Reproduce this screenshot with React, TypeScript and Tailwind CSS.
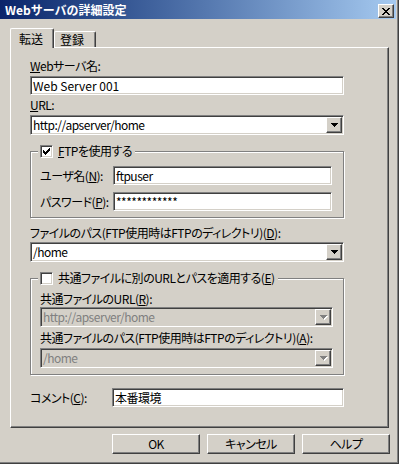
import React from "react";

const sunken =
  "border border-t-[#808080] border-l-[#808080] border-r-white border-b-white shadow-[inset_1px_1px_0_#404040,inset_-1px_-1px_0_#d4d0c8]";
const raised =
  "border border-t-white border-l-white border-r-[#404040] border-b-[#404040] shadow-[inset_-1px_-1px_0_#808080]";
const etched =
  "border border-[#808080] shadow-[inset_1px_1px_0_#ffffff,1px_1px_0_#ffffff]";

function CloseGlyph() {
  return (
    <svg width="8" height="7" viewBox="0 0 8 7" shapeRendering="crispEdges">
      <path
        fill="#000"
        d="M0 0h2v1h-2zM6 0h2v1h-2zM1 1h2v1h-2zM5 1h2v1h-2zM2 2h4v1h-4zM3 3h2v1h-2zM2 4h4v1h-4zM1 5h2v1h-2zM5 5h2v1h-2zM0 6h2v1h-2zM6 6h2v1h-2z"
      />
    </svg>
  );
}

function CheckGlyph() {
  return (
    <svg width="7" height="7" viewBox="0 0 7 7" shapeRendering="crispEdges">
      <path
        fill="#000"
        d="M0 2h1v3h-1zM1 3h1v3h-1zM2 4h1v3h-1zM3 3h1v3h-1zM4 2h1v3h-1zM5 1h1v3h-1zM6 0h1v3h-1z"
      />
    </svg>
  );
}

function Arrow({ disabled }: { disabled?: boolean }) {
  const d = "M0 0h7v1h-7zM1 1h5v1h-5zM2 2h3v1h-3zM3 3h1v1h-1z";
  return (
    <svg width="8" height="5" viewBox="0 0 8 5" shapeRendering="crispEdges">
      {disabled && <path fill="#fff" transform="translate(1 1)" d={d} />}
      <path fill={disabled ? "#808080" : "#000"} d={d} />
    </svg>
  );
}

function Checkbox({ checked }: { checked?: boolean }) {
  return (
    <span className={`w-[13px] h-[13px] shrink-0 bg-white flex items-center justify-center ${sunken}`}>
      {checked && <CheckGlyph />}
    </span>
  );
}

function Edit({ value, className }: { value: string; className: string }) {
  return (
    <div className={`${className} h-[19px] shrink-0 bg-white pl-[2px] flex items-center whitespace-nowrap overflow-hidden ${sunken}`}>
      {value}
    </div>
  );
}

function Combo({ value, className, disabled }: { value: string; className: string; disabled?: boolean }) {
  return (
    <div
      className={`${className} h-[20px] p-[1px] flex ${sunken} ${
        disabled ? "bg-[#d4d0c8] text-[#808080]" : "bg-white"
      }`}
    >
      <span className="flex-1 pl-[1px] flex items-center whitespace-nowrap overflow-hidden">{value}</span>
      <span className={`w-[16px] h-full bg-[#d4d0c8] flex items-center justify-center pl-[1px] ${raised}`}>
        <Arrow disabled={disabled} />
      </span>
    </div>
  );
}

function Button({ label }: { label: string }) {
  return (
    <button className={`w-[88px] h-[20px] bg-[#d4d0c8] flex items-center justify-center ${raised}`}>{label}</button>
  );
}

export default function App() {
  return (
    <div className="w-[399px] h-[464px] overflow-hidden whitespace-nowrap bg-[#d4d0c8] pr-[3px] font-['Noto_Sans_CJK_JP',sans-serif] [font-feature-settings:'palt'] text-[12px] leading-[14px] tracking-[-0.5px] text-black shadow-[inset_-1px_-1px_0_#404040,inset_-2px_-2px_0_#808080]">
      {/* title bar */}
      <div className="h-[19px] flex items-start bg-linear-to-r from-[#0a246a] to-[#a6caf0] pl-[5px] pr-[2px]">
        <span className="flex-1 mt-[3px] font-bold text-white tracking-normal [font-feature-settings:normal]">
          Webサーバの詳細設定
        </span>
        <span className={`mt-[4px] w-[16px] h-[14px] bg-[#d4d0c8] flex items-center justify-center ${raised}`}>
          <CloseGlyph />
        </span>
      </div>

      {/* tabs */}
      <div className="mt-[9px] ml-[10px] h-[19px] flex items-end tracking-normal">
        <div className="relative z-10 h-[20px] -mb-[1px] pl-[8px] pr-[10px] pt-[3px] bg-[#d4d0c8] border-l border-t border-r border-l-white border-t-white border-r-[#404040] rounded-t-[2px] shadow-[inset_-1px_0_0_#808080]">
          転送
        </div>
        <div className="h-[16px] pl-[5px] pr-[11px] pt-[1px] border-l border-t border-r border-l-white border-t-white border-r-[#404040] rounded-t-[2px] shadow-[inset_-1px_0_0_#808080]">
          登録
        </div>
      </div>

      {/* panel */}
      <div className={`ml-[10px] w-[379px] h-[381px] pl-[19px] pt-[11px] flex flex-col items-start ${raised}`}>
        <span>
          <u>W</u>ebサーバ名:
        </span>
        <Edit className="mt-[3px] w-[314px] tracking-normal" value="Web Server 001" />
        <span className="mt-[3px]">
          <u>U</u>RL:
        </span>
        <Combo className="mt-[3px] w-[314px]" value="http://apserver/home" />

        <fieldset className={`mt-[9px] w-[314px] px-[9px] pt-[8px] pb-[6px] ${etched}`}>
          <legend className="-ml-[2px] pl-[2px] pr-[3px] bg-[#d4d0c8]">
            <span className="h-[14px] flex items-center gap-[5px]">
              <Checkbox checked />
              <span>
                <u>F</u>TPを使用する
              </span>
            </span>
          </legend>
          <div className="flex items-center">
            <span className="w-[73px] shrink-0">
              ユーザ名(<u>N</u>):
            </span>
            <Edit className="w-[219px]" value="ftpuser" />
          </div>
          <div className="mt-[7px] flex items-center">
            <span className="w-[73px] shrink-0">
              パスワード(<u>P</u>):
            </span>
            <Edit className="w-[219px]" value="************" />
          </div>
        </fieldset>

        <span className="mt-[8px]">
          ファイルのパス(FTP使用時はFTPのディレクトリ)(<u>D</u>):
        </span>
        <Combo className="mt-[2px] w-[314px]" value="/home" />

        <fieldset className={`mt-[9px] w-[314px] px-[9px] pt-[7px] pb-[6px] ${etched}`}>
          <legend className="-ml-[2px] pl-[2px] pr-[3px] bg-[#d4d0c8]">
            <span className="h-[14px] flex items-center gap-[5px]">
              <Checkbox />
              <span>
                共通ファイルに別のURLとパスを適用する(<u>E</u>)
              </span>
            </span>
          </legend>
          <div>
            共通ファイルのURL(<u>R</u>):
          </div>
          <Combo className="mt-[1px] w-[293px]" value="http://apserver/home" disabled />
          <div className="mt-[4px]">
            共通ファイルのパス(FTP使用時はFTPのディレクトリ)(<u>A</u>):
          </div>
          <Combo className="mt-[3px] w-[293px]" value="/home" disabled />
        </fieldset>

        <div className="mt-[13px] flex items-center">
          <span className="w-[82px] shrink-0">
            コメント(<u>C</u>):
          </span>
          <Edit className="w-[232px]" value="本番環境" />
        </div>
      </div>

      {/* buttons */}
      <div className="mt-[6px] ml-[112px] flex gap-[7px]">
        <Button label="OK" />
        <Button label="キャンセル" />
        <Button label="ヘルプ" />
      </div>
    </div>
  );
}
